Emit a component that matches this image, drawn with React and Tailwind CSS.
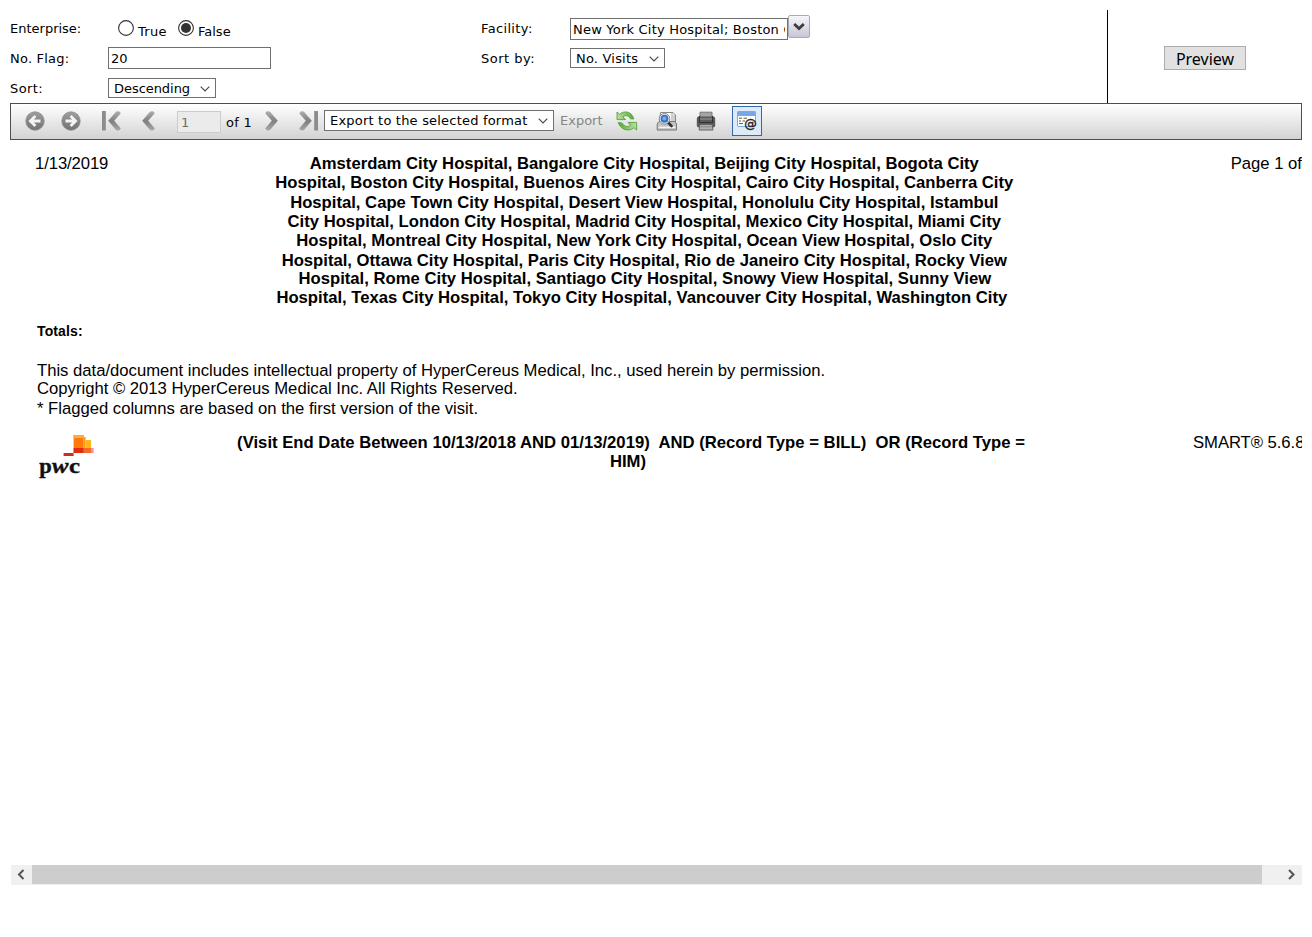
import React from 'react';

const Label = ({ children, className = '' }) => (
  <span className={`block whitespace-pre ${className}`}>{children}</span>
);

const Caret = ({ className = '' }) => (
  <svg width="10" height="6" viewBox="0 0 10 6" className={`shrink-0 ${className}`}>
    <path d="M0.7 0.7 L5 5 L9.3 0.7" fill="none" stroke="#444" strokeWidth="1.1" />
  </svg>
);

const Select = ({ children, className = '' }) => (
  <div className={`flex h-5 items-center justify-between border border-[#707070] bg-white pl-[5px] pr-[5px] ${className}`}>
    <span className="whitespace-nowrap leading-[18px]">{children}</span>
    <Caret />
  </div>
);

const Radio = ({ checked }) => (
  <svg width="16" height="16" viewBox="0 0 16 16" className="shrink-0">
    <circle cx="8" cy="8" r="7.4" fill="#fff" stroke="#333" strokeWidth="1.1" />
    {checked && <circle cx="8" cy="8" r="5" fill="#333" />}
  </svg>
);

const RoundArrow = ({ flip }) => (
  <svg width="20" height="20" viewBox="0 0 20 20" className={flip ? '-scale-x-100' : ''}>
    <defs>
      <linearGradient id="ball" x1="0" y1="0" x2="0" y2="1">
        <stop offset="0" stopColor="#a0a0a0" />
        <stop offset="0.5" stopColor="#868686" />
        <stop offset="1" stopColor="#747474" />
      </linearGradient>
    </defs>
    <circle cx="10" cy="10" r="9.2" fill="url(#ball)" stroke="#8c8c8c" strokeWidth="0.8" />
    <path d="M15.5 10 H6 M10.4 5 L5.4 10 L10.4 15" fill="none" stroke="#f4f4f4" strokeWidth="2.8" />
  </svg>
);

const Chevron = ({ flip, bar }) => (
  <svg width="20" height="20" viewBox="0 0 20 20" className={flip ? '-scale-x-100' : ''}>
    <defs>
      <linearGradient id="steel" x1="0" y1="0" x2="0" y2="20" gradientUnits="userSpaceOnUse">
        <stop offset="0" stopColor="#b0b0b0" />
        <stop offset="0.5" stopColor="#808080" />
        <stop offset="1" stopColor="#aaa" />
      </linearGradient>
    </defs>
    {bar && <rect x="1" y="0" width="3.8" height="19.5" fill="#8c8c8c" />}
    <path d="M15.2 0.4 L18 0.2 L19.8 2.2 L13.2 9.8 L19.8 17.4 L18 19.4 L15.2 19.2 L7.2 9.8 Z" fill="url(#steel)" />
  </svg>
);

const Refresh = () => (
  <svg width="22" height="22" viewBox="0 0 22 22">
    <defs>
      <linearGradient id="leaf" x1="0" y1="0" x2="1" y2="0">
        <stop offset="0" stopColor="#b9e3a0" />
        <stop offset="1" stopColor="#57a53c" />
      </linearGradient>
      <linearGradient id="leafBack" x1="0" y1="0" x2="1" y2="0">
        <stop offset="0" stopColor="#57a53c" />
        <stop offset="1" stopColor="#b9e3a0" />
      </linearGradient>
    </defs>
    <path d="M1 2 L3.6 4.3 C7.5 0.6 15.5 0.6 17.8 9 L14.4 8.8 C12.6 5.4 9.6 4.6 7 7 L9.6 9.6 H1 Z" fill="url(#leaf)" stroke="#57a33d" strokeWidth="0.9" />
    <path d="M20.6 20 L18 17.7 C14.1 21.4 5.5 21.4 2.2 12.4 L6.4 13.2 C8.6 17 12 17.4 14.6 15 L12 12.4 H20.6 Z" fill="url(#leafBack)" stroke="#57a33d" strokeWidth="0.9" />
  </svg>
);

const PrintPreview = () => (
  <svg width="22" height="22" viewBox="0 0 22 22">
    <path d="M4.5 2.5 H17 L19.5 5 V14 H3.5 Z" fill="#fafafa" stroke="#888" />
    <path d="M16 3 V14 M18 5 V14" stroke="#999" strokeWidth="0.9" />
    <path d="M3 11.5 H19 L20.5 14 V20 H1.2 V14 Z" fill="#c4c4c4" stroke="#777" />
    <path d="M2.5 17.4 H19.5" stroke="#f2f2f2" strokeWidth="1.5" />
    <path d="M11.6 12 L15.5 16" stroke="#333" strokeWidth="2.6" strokeLinecap="round" />
    <circle cx="8.5" cy="8.8" r="5.3" fill="#f2f7fd" stroke="#7c7c7c" strokeWidth="0.9" />
    <circle cx="8.5" cy="8.8" r="4" fill="#3b73c2" />
    <circle cx="8.3" cy="8.4" r="2" fill="#7caae6" />
  </svg>
);

const Printer = () => (
  <svg width="20" height="20" viewBox="0 0 20 20">
    <path d="M4 7 V1.2 H16 V7" fill="#a4a4a4" stroke="#777" />
    <rect x="0.8" y="5.5" width="18.4" height="11" rx="2.2" fill="#5b5b5b" />
    <path d="M2.5 8 H17.5" stroke="#858585" strokeWidth="1.5" />
    <path d="M3.4 5 V11.5 H16.6 V5" fill="none" stroke="#333" strokeWidth="1.2" />
    <path d="M4 13.5 H16 L17 19 H3 Z" fill="#b0b0b0" stroke="#666" />
    <path d="M4.5 15.8 H15.5" stroke="#888" />
  </svg>
);

const LinkWindow = () => (
  <svg width="22" height="22" viewBox="0 0 22 22">
    <rect x="1.5" y="1.5" width="18" height="15" rx="0.8" fill="#fff" stroke="#80a9de" />
    <rect x="1.5" y="1.5" width="18" height="4.5" fill="#78a7e8" />
    <path d="M3 8.2 H6 M7.5 8.2 H11 M3 11 H5 M6.5 11 H9 M3 13.6 H7" stroke="#555" strokeWidth="1" />
    <text x="8.2" y="18.2" fontFamily="DejaVu Sans" fontSize="12.5" fill="#222" stroke="#222" strokeWidth="0.4">@</text>
  </svg>
);

const Logo = () => (
  <svg width="60" height="48" viewBox="-0.6 -1 60 48">
    <rect x="36" y="1" width="10" height="18" fill="#ff7a0a" />
    <rect x="36" y="1" width="10" height="3" fill="#ffab45" />
    <rect x="46" y="3" width="2" height="16" fill="#ff9812" />
    <rect x="48" y="6" width="5.5" height="9" fill="#ffb81c" />
    <rect x="46" y="14" width="8" height="5" fill="#f46b25" />
    <rect x="53.5" y="14" width="2.5" height="5" fill="#f88db0" />
    <rect x="36" y="14" width="10" height="5" fill="#df2d10" />
    <rect x="26" y="19" width="10" height="3" fill="#d6281c" />
    <g fontFamily="Liberation Serif" fontWeight="bold" fontSize="22" fill="#111" stroke="#111" strokeWidth="0.4">
      <text x="1.6" y="39" textLength="12.5" lengthAdjust="spacingAndGlyphs">p</text>
      <text x="14.4" y="39" fontStyle="italic" textLength="16.5" lengthAdjust="spacingAndGlyphs">w</text>
      <text x="31.4" y="39" textLength="11" lengthAdjust="spacingAndGlyphs">c</text>
    </g>
  </svg>
);

const title = [
  ['Amsterdam City Hospital, Bangalore City Hospital, Beijing City Hospital, Bogota City', 'h-[19px]'],
  ['Hospital, Boston City Hospital, Buenos Aires City Hospital, Cairo City Hospital, Canberra City', 'h-5'],
  ['Hospital, Cape Town City Hospital, Desert View Hospital, Honolulu City Hospital, Istambul', 'h-[19px]'],
  ['City Hospital, London City Hospital, Madrid City Hospital, Mexico City Hospital, Miami City', 'h-[19px]'],
  ['Hospital, Montreal City Hospital, New York City Hospital, Ocean View Hospital, Oslo City', 'h-5'],
  ['Hospital, Ottawa City Hospital, Paris City Hospital, Rio de Janeiro City Hospital, Rocky View', 'h-[18px]'],
  ['Hospital, Rome City Hospital, Santiago City Hospital, Snowy View Hospital, Sunny View', 'h-[19px] pl-[1px] tracking-[0.012px]'],
  ['Hospital, Texas City Hospital, Tokyo City Hospital, Vancouver City Hospital, Washington City', 'h-[19px] pr-[5px]'],
];

export default function App() {
  return (
    <div className="flex h-[937px] w-[1312px] flex-col overflow-hidden bg-white px-[10px] pt-[10px] font-['DejaVu_Sans',sans-serif] text-[13px] leading-5 text-black">
      <div className="flex h-[93px] shrink-0">
        <div className="grid w-[471px] grid-cols-[98px_1fr] grid-rows-[33px_30px_30px]">
          <Label className="pt-[9px]">Enterprise:</Label>
          <div className="flex items-start pt-[10px] pl-[10px]">
            <Radio />
            <span className="ml-1 w-[40px] pt-[2px] leading-[19px] tracking-[0.3px]">True</span>
            <Radio checked />
            <span className="ml-1 pt-[2px] leading-[19px]">False</span>
          </div>
          <Label className="pt-[6px] tracking-[0.22px]">No. Flag:</Label>
          <div className="mt-1 flex h-[22px] w-[163px] items-center border border-[#707070] pt-0.5 pl-[2px]">20</div>
          <Label className="pt-[6px] tracking-[0.4px]">Sort:</Label>
          <Select className="mt-[5px] w-[108px] pt-px tracking-[-0.05px]">Descending</Select>
        </div>
        <div className="grid w-[626px] grid-cols-[89px_1fr] grid-rows-[33px_60px]">
          <Label className="pt-[9px] tracking-[0.35px]">Facility:</Label>
          <div className="flex items-start pt-[5px]">
            <div className="mt-[3px] h-[22px] w-[218px] border border-[#707070] px-[2px] pt-px">
              <div className="h-[19px] overflow-hidden whitespace-nowrap tracking-[0.21px]">New York City Hospital; Boston City Hospital</div>
            </div>
            <div className="flex h-[23px] w-[22px] items-center justify-center rounded-[2px] border border-[#a9a9b8] bg-linear-to-b from-[#f6f6fc] to-[#c6c6d6]">
              <svg width="12" height="8" viewBox="0 0 12 8">
                <path d="M1.2 1 L6 5.5 L10.8 1" fill="none" stroke="#3c3c3c" strokeWidth="2.8" />
              </svg>
            </div>
          </div>
          <Label className="pt-[6px] tracking-[0.5px]">Sort by:</Label>
          <Select className="mt-[5px] w-[95px] self-start pt-px tracking-[0.2px]">No. Visits</Select>
        </div>
        <div className="flex flex-1 items-start border-l border-black pt-9 pl-14">
          <div className="flex h-6 w-[82px] items-center justify-center border border-[#adadad] bg-[#e1e1e1] pt-0.5 font-['Noto_Sans','Open_Sans',sans-serif] text-[16px]">Preview</div>
        </div>
      </div>

      <div className="flex h-[37px] shrink-0 items-start border border-[#4f4f4f] bg-linear-to-b from-white to-[#d3d3d3] pl-[14px]">
        <div className="flex pt-[7px]">
          <RoundArrow />
          <div className="w-4" />
          <RoundArrow flip />
          <div className="w-5" />
          <Chevron bar />
          <div className="w-[14px]" />
          <Chevron />
        </div>
        <div className="mt-[7px] ml-[22px] flex h-[22px] w-11 items-center border border-[#ccc] bg-[#ebebeb] pt-0.5 pl-[3px] text-[#6d6d6d]">1</div>
        <span className="mt-[9px] ml-[5px] w-[39px] whitespace-nowrap tracking-[0.25px]">of 1</span>
        <div className="flex pt-[7px]">
          <Chevron flip />
          <div className="w-[14px]" />
          <Chevron flip bar />
        </div>
        <Select className="mt-[6px] ml-[5px] h-[21px] w-[230px] tracking-[0.2px]">Export to the selected format</Select>
        <span className="mt-[7px] ml-[6px] w-[56px] text-[#868686]">Export</span>
        <div className="pt-[6px]"><Refresh /></div>
        <div className="ml-[18px] pt-[6px]"><PrintPreview /></div>
        <div className="ml-[18px] pt-[7px]"><Printer /></div>
        <div className="mt-[2px] ml-4 flex h-[30px] w-[30px] items-center justify-center border border-[#3368a8] bg-[#dcebf7]"><LinkWindow /></div>
      </div>

      <div className="flex h-[725px] shrink-0 flex-col overflow-hidden font-['Liberation_Sans',Arial,sans-serif] text-[16.67px] leading-[19px]">
        <div className="flex h-[182px] pt-[14px] pl-[25px]">
          <span className="w-[225px] tracking-[-0.09px]">1/13/2019</span>
          <div className="flex w-[769px] flex-col items-center font-bold">
            {title.map(([line, h]) => (
              <span key={line} className={`whitespace-nowrap ${h}`}>{line}</span>
            ))}
          </div>
          <span className="ml-[202px] whitespace-nowrap">Page 1 of</span>
        </div>
        <div className="h-[39px] pl-[27px] text-[14px] font-bold tracking-[0.12px]">Totals:</div>
        <div className="flex h-[72px] flex-col pl-[27px]">
          <span className="h-[18px] tracking-[-0.006px]">This data/document includes intellectual property of HyperCereus Medical, Inc., used herein by permission.</span>
          <span className="h-5">Copyright © 2013 HyperCereus Medical Inc. All Rights Reserved.</span>
          <span className="tracking-[-0.01px]">* Flagged columns are based on the first version of the visit.</span>
        </div>
        <div className="flex pl-[27px]">
          <Logo />
          <div className="ml-[120px] flex w-[822px] flex-col items-center font-bold">
            <span className="whitespace-pre pl-[6px] tracking-[0.014px]">{'(Visit End Date Between 10/13/2018 AND 01/13/2019)  AND (Record Type = BILL)  OR (Record Type ='}</span>
            <span>HIM)</span>
          </div>
          <span className="ml-[154px] w-[109px] shrink-0 whitespace-nowrap tracking-[-0.05px]">SMART® 5.6.8</span>
        </div>
      </div>

      <div className="ml-px flex h-5 shrink-0 items-start justify-between bg-[#f0f0f0]">
        <svg width="21" height="20" viewBox="0 0 21 20"><path d="M12.5 5 L8 9.5 L12.5 14" fill="none" stroke="#555" strokeWidth="2" /></svg>
        <div className="h-[19px] flex-1 bg-[#cdcdcd]" />
        <svg width="40" height="20" viewBox="0 0 40 20"><path d="M27 5 L31.5 9.5 L27 14" fill="none" stroke="#555" strokeWidth="2" /></svg>
      </div>
    </div>
  );
}
